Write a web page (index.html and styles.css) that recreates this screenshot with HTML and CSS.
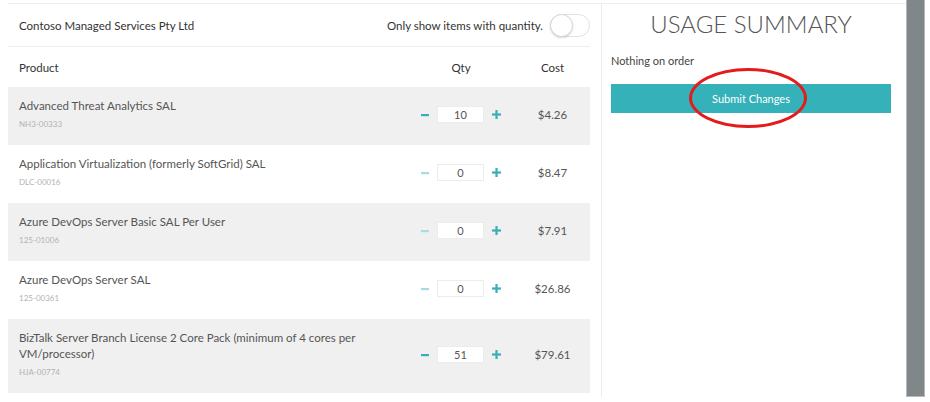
FILE: index.html
```html
<!DOCTYPE html>
<html>
<head>
    <meta charset="UTF-8">
    <title>Usage Summary</title>
    <link rel="stylesheet" href="styles.css">
</head>
<body>
    <div class="window">
        <div class="page">
            <div class="main">
                <div class="toolbar">
                    <span class="company">Contoso Managed Services Pty Ltd</span>
                    <label class="filter">
                        Only show items with quantity.
                        <span class="switch"><span class="knob"></span></span>
                    </label>
                </div>

                <div class="grid grid-head">
                    <div>Product</div>
                    <div class="center">Qty</div>
                    <div class="center">Cost</div>
                </div>

                <div class="grid item alt">
                    <div>
                        <div class="name">Advanced Threat Analytics SAL</div>
                        <div class="sku">NH3-00333</div>
                    </div>
                    <div class="qty">
                        <svg class="minus on" width="8" height="8" viewBox="0 0 8 8"><rect x="0" y="3" width="8" height="2.2"/></svg>
                        <input type="text" value="10">
                        <svg class="plus" width="9" height="9" viewBox="0 0 9 9"><rect x="0" y="3.4" width="9" height="2.2"/><rect x="3.4" y="0" width="2.2" height="9"/></svg>
                    </div>
                    <div class="cost">$4.26</div>
                </div>

                <div class="grid item">
                    <div>
                        <div class="name">Application Virtualization (formerly SoftGrid) SAL</div>
                        <div class="sku">DLC-00016</div>
                    </div>
                    <div class="qty">
                        <svg class="minus" width="8" height="8" viewBox="0 0 8 8"><rect x="0" y="3" width="8" height="2.2"/></svg>
                        <input type="text" value="0">
                        <svg class="plus" width="9" height="9" viewBox="0 0 9 9"><rect x="0" y="3.4" width="9" height="2.2"/><rect x="3.4" y="0" width="2.2" height="9"/></svg>
                    </div>
                    <div class="cost">$8.47</div>
                </div>

                <div class="grid item alt">
                    <div>
                        <div class="name">Azure DevOps Server Basic SAL Per User</div>
                        <div class="sku">125-01006</div>
                    </div>
                    <div class="qty">
                        <svg class="minus" width="8" height="8" viewBox="0 0 8 8"><rect x="0" y="3" width="8" height="2.2"/></svg>
                        <input type="text" value="0">
                        <svg class="plus" width="9" height="9" viewBox="0 0 9 9"><rect x="0" y="3.4" width="9" height="2.2"/><rect x="3.4" y="0" width="2.2" height="9"/></svg>
                    </div>
                    <div class="cost">$7.91</div>
                </div>

                <div class="grid item">
                    <div>
                        <div class="name">Azure DevOps Server SAL</div>
                        <div class="sku">125-00361</div>
                    </div>
                    <div class="qty">
                        <svg class="minus" width="8" height="8" viewBox="0 0 8 8"><rect x="0" y="3" width="8" height="2.2"/></svg>
                        <input type="text" value="0">
                        <svg class="plus" width="9" height="9" viewBox="0 0 9 9"><rect x="0" y="3.4" width="9" height="2.2"/><rect x="3.4" y="0" width="2.2" height="9"/></svg>
                    </div>
                    <div class="cost">$26.86</div>
                </div>

                <div class="grid item alt">
                    <div>
                        <div class="name wrap">BizTalk Server Branch License 2 Core Pack (minimum of 4 cores per VM/processor)</div>
                        <div class="sku">HJA-00774</div>
                    </div>
                    <div class="qty">
                        <svg class="minus on" width="8" height="8" viewBox="0 0 8 8"><rect x="0" y="3" width="8" height="2.2"/></svg>
                        <input type="text" value="51">
                        <svg class="plus" width="9" height="9" viewBox="0 0 9 9"><rect x="0" y="3.4" width="9" height="2.2"/><rect x="3.4" y="0" width="2.2" height="9"/></svg>
                    </div>
                    <div class="cost">$79.61</div>
                </div>
            </div>

            <div class="summary">
                <h1>USAGE SUMMARY</h1>
                <p>Nothing on order</p>
                <button>Submit Changes</button>
                <div class="highlight"></div>
            </div>
        </div>
        <div class="scrollbar"></div>
    </div>
</body>
</html>
```

FILE: styles.css
```css
body {
    margin: 0;
    padding: 0;
    background-color: white;
    font-family: Lato, "Noto Sans", sans-serif;
    color: #555;
}

.window {
    display: flex;
    align-items: flex-start;
}

.page {
    display: flex;
    width: 898px;
    height: 393px;
    margin: 3px 0 0 8px;
    border-top: 1px solid #eeeeee;
}

.main {
    width: 582px;
}

.toolbar {
    display: flex;
    align-items: center;
    justify-content: space-between;
    height: 42px;
    padding-left: 11px;
    border-bottom: 1px solid #eeeeee;
    font-size: 11.5px;
}

.company {
    color: #333;
}

.filter {
    display: flex;
    align-items: center;
    gap: 7px;
    color: #333;
}

.switch {
    display: block;
    width: 38px;
    height: 21px;
    border: 1px solid #e2e2e2;
    border-radius: 12px;
    position: relative;
}

.knob {
    position: absolute;
    left: -1px;
    top: -1px;
    width: 21px;
    height: 21px;
    border: 1px solid #d6d6d6;
    border-radius: 50%;
    background: white;
    box-shadow: 0 1px 2px rgba(0, 0, 0, 0.15);
}

.grid {
    display: grid;
    grid-template-columns: 1fr 118px 65px;
    padding: 0 5px 0 11px;
    align-items: center;
}

.grid-head {
    height: 40px;
    font-size: 11.5px;
    color: #333;
}

.center {
    text-align: center;
}

.item {
    padding-top: 11px;
    padding-bottom: 14px;
}

.alt {
    background-color: #f0f0f0;
}

.name {
    font-size: 11.5px;
    line-height: 16px;
    color: #555;
}

.wrap {
    max-width: 385px;
}

.sku {
    font-size: 8px;
    line-height: 14px;
    margin-top: 3px;
    color: #b3b3b3;
}

.qty {
    display: flex;
    align-items: center;
    justify-content: center;
    gap: 8px;
}

.qty input {
    width: 45px;
    height: 15px;
    padding: 0;
    border: 1px solid #ececec;
    background: white;
    font-family: Lato, "Noto Sans", sans-serif;
    font-size: 11px;
    color: #555;
    text-align: center;
}

.minus {
    fill: #a9dce0;
}

.minus.on {
    fill: #3aaeb8;
}

.plus {
    fill: #3aaeb8;
}

.cost {
    text-align: center;
    font-size: 11.5px;
    color: #555;
}

.summary {
    flex: 1;
    margin-left: 11px;
    padding: 0 15px 0 9px;
    border-left: 1px solid #ececec;
    position: relative;
}

.summary h1 {
    margin: 5px 0 0 0;
    font-size: 24px;
    line-height: 30px;
    font-weight: 300;
    text-align: center;
    color: #555;
}

.summary p {
    margin: 14px 0 0 0;
    font-size: 11px;
    line-height: 16px;
    color: #444;
}

.summary button {
    display: block;
    width: 100%;
    height: 29px;
    margin-top: 15px;
    border: none;
    background-color: #35b1b9;
    color: white;
    font-family: Lato, "Noto Sans", sans-serif;
    font-size: 11px;
}

.highlight {
    position: absolute;
    left: 87px;
    top: 64px;
    width: 112px;
    height: 54px;
    border: 3px solid #e31b1b;
    border-radius: 50%;
}

.scrollbar {
    width: 17px;
    height: 396px;
    background-color: #7f8788;
    border: 1px solid #b5b9ba;
    border-top: none;
}
```
